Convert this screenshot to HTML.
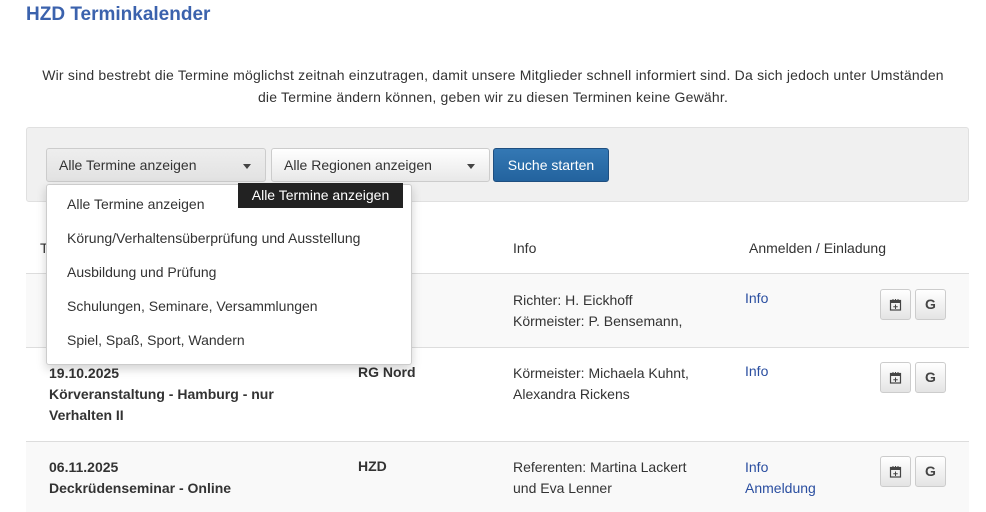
<!DOCTYPE html>
<html><head><meta charset="utf-8"><style>
*{box-sizing:border-box;margin:0;padding:0}
body{width:986px;height:512px;overflow:hidden;background:#fff;font-family:"Liberation Sans",sans-serif;font-size:14px;color:#333;position:relative}
.a{position:absolute}
h1{position:absolute;left:26px;top:4px;font-size:19px;color:#3b62ad;font-weight:bold}
.p{left:0;width:986px;text-align:center;line-height:22px;top:64px;color:#333;letter-spacing:.2px}
.well{left:26px;top:127px;width:943px;height:75px;background:#f0f0f0;border:1px solid #e0e0e0;border-radius:3px}
.sel{top:148px;height:34px;border:1px solid #ccc;border-radius:3px;background:linear-gradient(#fff,#e8e8e8);padding:8px 12px;color:#333}
.sel:after{content:"";position:absolute;right:14px;top:15px;border:4px solid transparent;border-top:5px solid #444;border-bottom:0}
.btn{left:493px;top:148px;width:116px;height:34px;border:1px solid #1f4f80;border-radius:3px;background:linear-gradient(#3478b4,#23639e);color:#fff;text-align:center;line-height:32px}
.dd{left:46px;top:184px;width:366px;height:181px;background:#fff;border:1px solid #ccc;border-radius:3px;box-shadow:0 4px 10px rgba(0,0,0,.18);z-index:5}
.dd div{position:absolute;left:20px;color:#333}
.tip{left:238px;top:183px;width:165px;height:25px;background:#222;color:#fff;z-index:6;line-height:24px;text-align:center}
.row{left:26px;width:943px;border-top:1px solid #ddd}
.b{font-weight:bold}
.l{color:#2a4ea0}
.ib{width:31px;height:31px;border:1px solid #ccc;border-radius:3px;background:linear-gradient(#fff,#e4e4e4);text-align:center;line-height:29px;font-weight:bold;color:#444}
.ib svg{margin-top:8px}
</style></head><body>
<h1>HZD Terminkalender</h1>
<div class="a p">Wir sind bestrebt die Termine möglichst zeitnah einzutragen, damit unsere Mitglieder schnell informiert sind. Da sich jedoch unter Umständen<br>die Termine ändern können, geben wir zu diesen Terminen keine Gewähr.</div>
<div class="a well"></div>
<div class="a sel" style="left:46px;width:220px;background:linear-gradient(#eee,#e2e2e2)">Alle Termine anzeigen</div>
<div class="a sel" style="left:271px;width:219px">Alle Regionen anzeigen</div>
<div class="a btn">Suche starten</div>
<div class="a dd">
<div style="top:11px">Alle Termine anzeigen</div>
<div style="top:45px">Körung/Verhaltensüberprüfung und Ausstellung</div>
<div style="top:79px">Ausbildung und Prüfung</div>
<div style="top:113px">Schulungen, Seminare, Versammlungen</div>
<div style="top:147px">Spiel, Spaß, Sport, Wandern</div>
</div>
<div class="a tip">Alle Termine anzeigen</div>
<div class="a" style="left:40px;top:240px">T</div>
<div class="a" style="left:513px;top:240px">Info</div>
<div class="a" style="left:749px;top:240px">Anmelden / Einladung</div>
<div class="a row" style="top:273px;height:74px;background:#f9f9f9"></div>
<div class="a row" style="top:347px;height:94px"></div>
<div class="a row" style="top:441px;height:71px;background:#f9f9f9"></div>
<div class="a" style="left:513px;top:290px;line-height:21px">Richter: H. Eickhoff<br>Körmeister: P. Bensemann,</div>
<div class="a l" style="left:745px;top:290px">Info</div>
<div class="a b" style="left:49px;top:363px;line-height:21px">19.10.2025<br>Körveranstaltung - Hamburg - nur<br>Verhalten II</div>
<div class="a b" style="left:358px;top:364px">RG Nord</div>
<div class="a" style="left:513px;top:363px;line-height:21px">Körmeister: Michaela Kuhnt,<br>Alexandra Rickens</div>
<div class="a l" style="left:745px;top:363px">Info</div>
<div class="a b" style="left:49px;top:457px;line-height:21px">06.11.2025<br>Deckrüdenseminar - Online</div>
<div class="a b" style="left:358px;top:458px">HZD</div>
<div class="a" style="left:513px;top:457px;line-height:21px">Referenten: Martina Lackert<br>und Eva Lenner</div>
<div class="a l" style="left:745px;top:457px;line-height:21px">Info<br>Anmeldung</div>
<svg width="0" height="0" style="position:absolute"><defs><g id="cal"><rect x="1.5" y="2.5" width="10" height="9.5" fill="none" stroke="#444" stroke-width="1.2"/><rect x="1.5" y="2.5" width="10" height="2.5" fill="#444"/><path d="M4 1v3M6.5 1v3M9 1v3" stroke="#444" stroke-width="1"/><path d="M6.5 6.5v4.5M4.3 8.7h4.4" stroke="#444" stroke-width="1"/></g></defs></svg>
<div class="a ib" style="left:880px;top:289px"><svg width="13" height="13"><use href="#cal"/></svg></div><div class="a ib" style="left:915px;top:289px">G</div>
<div class="a ib" style="left:880px;top:362px"><svg width="13" height="13"><use href="#cal"/></svg></div><div class="a ib" style="left:915px;top:362px">G</div>
<div class="a ib" style="left:880px;top:456px"><svg width="13" height="13"><use href="#cal"/></svg></div><div class="a ib" style="left:915px;top:456px">G</div>
</body></html>
